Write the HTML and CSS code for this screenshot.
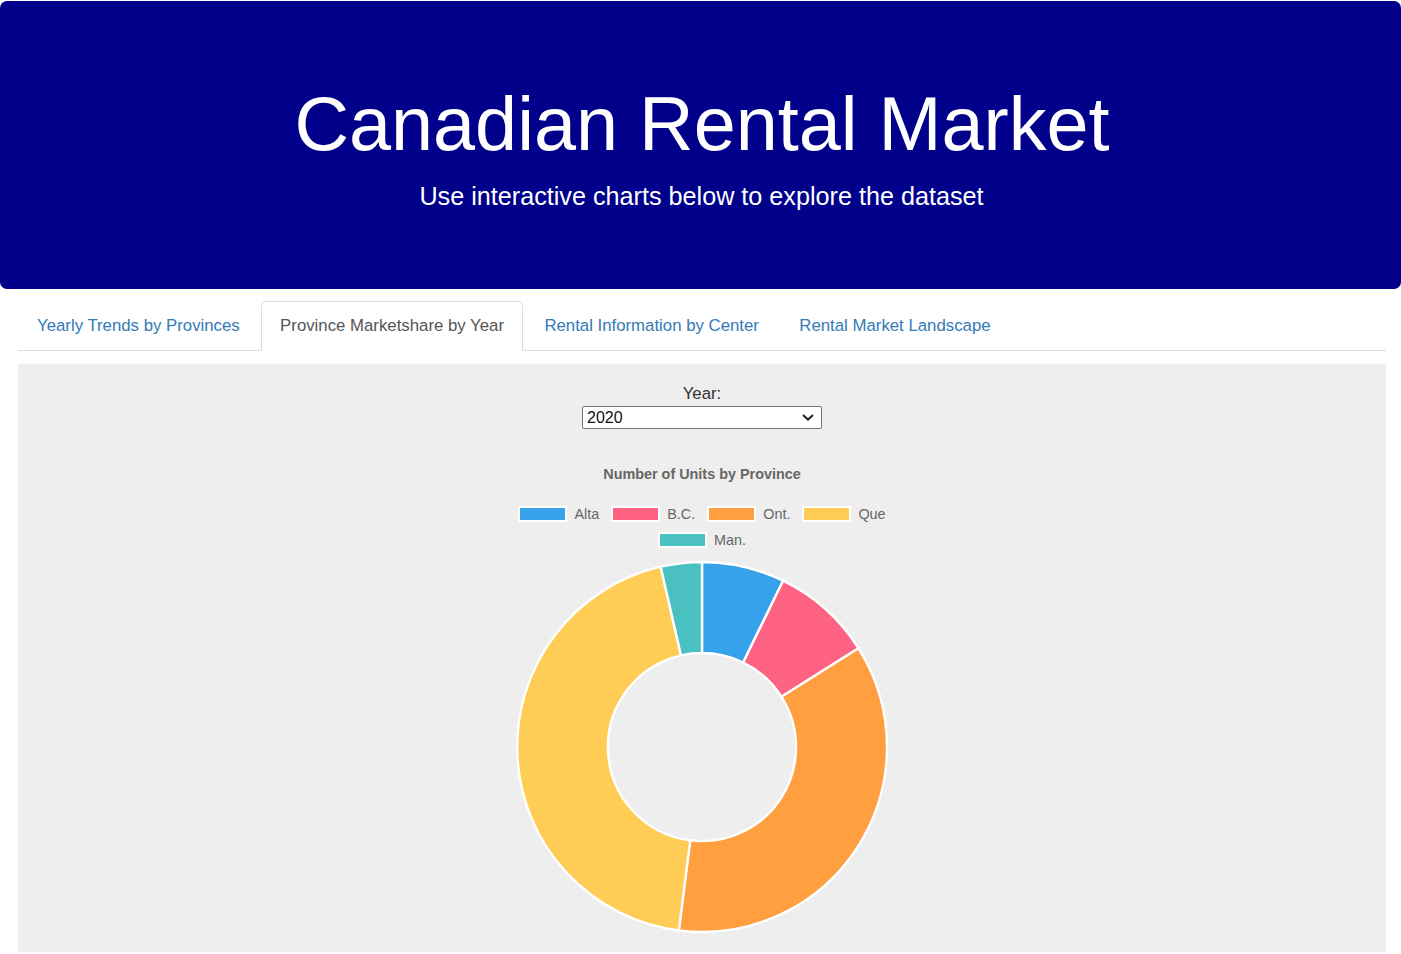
FILE: index.html
```html
<!DOCTYPE html>
<html lang="en">
<head>
<meta charset="utf-8">
<title>Canadian Rental Market</title>
<link rel="stylesheet" href="styles.css">
</head>
<body>
<header class="hero">
  <h1 class="hero-title">Canadian Rental Market</h1>
  <p class="hero-sub">Use interactive charts below to explore the dataset</p>
</header>
<main class="container">
  <ul class="tabs">
    <li class="tab"><a class="tab-link" href="#">Yearly Trends by Provinces</a></li>
    <li class="tab"><a class="tab-link active" href="#">Province Marketshare by Year</a></li>
    <li class="tab"><a class="tab-link" href="#">Rental Information by Center</a></li>
    <li class="tab"><a class="tab-link" href="#">Rental Market Landscape</a></li>
  </ul>
  <section class="panel">
    <label class="year-label" for="year">Year:</label>
    <select class="year-select" id="year">
      <option>2020</option>
      <option>2019</option>
      <option>2018</option>
    </select>
    <div class="chart-title">Number of Units by Province</div>
    <div class="legend">
      <div class="legend-row">
        <span class="legend-item"><span class="swatch sw-alta"></span>Alta</span>
        <span class="legend-item"><span class="swatch sw-bc"></span>B.C.</span>
        <span class="legend-item"><span class="swatch sw-ont"></span>Ont.</span>
        <span class="legend-item"><span class="swatch sw-que"></span>Que</span>
      </div>
      <div class="legend-row">
        <span class="legend-item"><span class="swatch sw-man"></span>Man.</span>
      </div>
    </div>
    <svg class="donut" width="380" height="380" viewBox="0 0 380 380">
      <g stroke="#fff" stroke-width="2.4" stroke-linejoin="round">
        <path fill="#36a2eb" d="M190,5 A185,185 0 0 1 271.1,23.7 L231.2,105.5 A94,94 0 0 0 190,96 Z"/>
        <path fill="#ff6384" d="M271.1,23.7 A185,185 0 0 1 346.5,91.3 L269.5,139.8 A94,94 0 0 0 231.2,105.5 Z"/>
        <path fill="#ff9f40" d="M346.5,91.3 A185,185 0 0 1 166.8,373.5 L178.2,283.3 A94,94 0 0 0 269.5,139.8 Z"/>
        <path fill="#ffcd56" d="M166.8,373.5 A185,185 0 0 1 148.7,9.7 L169.0,98.4 A94,94 0 0 0 178.2,283.3 Z"/>
        <path fill="#4bc0c0" d="M148.7,9.7 A185,185 0 0 1 190,5 L190,96 A94,94 0 0 0 169.0,98.4 Z"/>
      </g>
    </svg>
  </section>
</main>
</body>
</html>
```

FILE: styles.css
```css
* { box-sizing: border-box; }

html, body {
  margin: 0;
  padding: 0;
  background: #fff;
}

body {
  font-family: "Liberation Sans", Arial, Helvetica, sans-serif;
  font-size: 16.8px;
  line-height: 24px;
  color: #333;
}

.hero {
  margin-top: 1px;
  background: #00008b;
  color: #fff;
  border-radius: 7px;
  padding: 57.6px 0;
  text-align: center;
}

.hero-title {
  margin: 24px 0 12px;
  padding-left: 3px;
  font-size: 75.6px;
  line-height: 1.1;
  font-weight: normal;
}

.hero-sub {
  margin: 0 0 18px;
  padding-left: 2px;
  font-size: 25.2px;
  line-height: 36px;
}

.container {
  padding: 12px 15px 0 18px;
}

.tabs {
  list-style: none;
  margin: 0;
  padding: 0;
  display: flex;
  border-bottom: 1px solid #ddd;
}

.tab {
  margin-bottom: -1px;
}

.tab-link {
  display: block;
  padding: 12px 18px;
  margin-right: 2.4px;
  line-height: 24px;
  border: 1px solid transparent;
  border-radius: 5px 5px 0 0;
  color: #337ab7;
  text-decoration: none;
}

.tab-link.active {
  color: #555;
  background: #fff;
  border-color: #ddd #ddd transparent;
}

.panel {
  margin-top: 13px;
  height: 588px;
  background: #eee;
  padding-top: 18px;
  display: flex;
  flex-direction: column;
  align-items: center;
  overflow: hidden;
}

.year-label {
  display: block;
  line-height: 24px;
  color: #333;
}

.year-select {
  width: 240px;
  height: 23px;
  padding: 0 0 0 4px;
  font-family: "Liberation Sans", Arial, sans-serif;
  font-size: 16px;
  color: #111;
  background-color: #fff;
  border: 1px solid #767676;
  border-radius: 2px;
  -webkit-appearance: none;
  appearance: none;
  background-image: url("data:image/svg+xml;utf8,<svg xmlns='http://www.w3.org/2000/svg' width='12' height='7' viewBox='0 0 12 7'><path d='M1 1 L6 5.6 L11 1' fill='none' stroke='%23222' stroke-width='2'/></svg>");
  background-repeat: no-repeat;
  background-position: right 7px center;
}

.chart-title {
  margin-top: 37px;
  font-size: 14.4px;
  line-height: 17px;
  font-weight: bold;
  color: #666;
}

.legend {
  margin-top: 17.5px;
  display: flex;
  flex-direction: column;
  align-items: center;
}

.legend-row {
  display: flex;
  justify-content: center;
  height: 26.4px;
  align-items: center;
  gap: 12px;
}

.legend-item {
  display: flex;
  align-items: center;
  font-size: 14.4px;
  line-height: 17px;
  color: #666;
}

.swatch {
  display: inline-block;
  width: 49px;
  height: 16px;
  border: 2px solid #fff;
  margin-right: 7px;
}

.sw-alta { background: #36a2eb; }
.sw-bc { background: #ff6384; }
.sw-ont { background: #ff9f40; }
.sw-que { background: #ffcd56; }
.sw-man { background: #4bc0c0; }

.donut {
  display: block;
  margin-top: 3px;
  flex: none;
}
```
